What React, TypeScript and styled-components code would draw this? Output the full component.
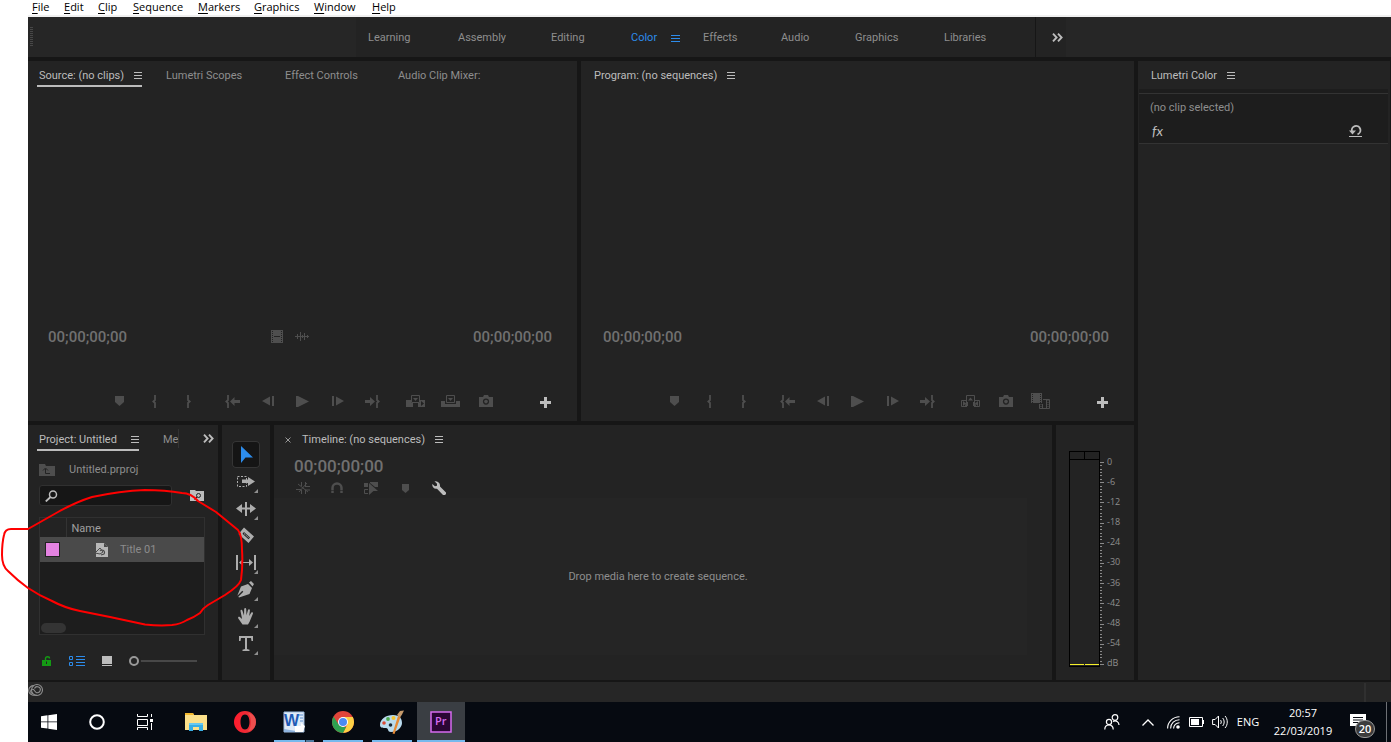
import React from "react";
import styled, { createGlobalStyle, css } from "styled-components";

const color = {
  gap: "#161616",
  panel: "#232323",
  bar: "#262626",
  well: "#1d1d1d",
  line: "#333333",
  text: "#8e8e8e",
  bright: "#bcbcbc",
  dim: "#4e4e4e",
  blue: "#2d8ceb",
};

const uiFont = `Roboto, "Open Sans", sans-serif`;
const sysFont = `"Open Sans", "Noto Sans", sans-serif`;

const GlobalStyle = createGlobalStyle`
  *, *::before, *::after { box-sizing: border-box; }
  body { margin: 0; background: #fff; }
  button { border: 0; padding: 0; margin: 0; background: none; color: inherit; font: inherit; text-align: left; cursor: default; }
  svg { display: block; flex: none; }
`;

/* ---------- frame ---------- */

const Page = styled.div`
  position: relative;
  min-height: 100vh;
  padding-left: 28px;
  display: flex;
  flex-direction: column;
  overflow: hidden;
  font-family: ${uiFont};
  font-size: 11px;
  line-height: 16px;
  color: ${color.text};
`;

const MenuBar = styled.nav`
  display: flex;
  height: 17px;
  padding: 0 0 2px 4px;
  border-bottom: 2px solid #f0f0f0;
  background: #fff;
  color: #000;
  font-family: ${sysFont};
  line-height: 13px;
`;

const MenuItem = styled.button<{ $w: number }>`
  width: ${(p) => p.$w}px;
  white-space: nowrap;
`;

const Underlined = styled.span`
  text-decoration: underline;
  text-underline-offset: 2px;
`;

const WorkspaceBar = styled.nav`
  display: flex;
  height: 40px;
  background: ${color.bar};
`;

const Grip = styled.div`
  width: 3px;
  height: 19px;
  margin: 10px 323px 0 2px;
  background: repeating-linear-gradient(#474747 0 1px, transparent 1px 2px);
`;

const WorkspaceTabs = styled.div`
  display: flex;
  align-items: center;
  width: 680px;
  padding: 2px 0 0 12px;
  background: ${color.panel};
  border-right: 1px solid ${color.gap};
`;

const WorkspaceTab = styled.button<{ $w: number; $active?: boolean }>`
  display: flex;
  align-items: center;
  gap: 14px;
  width: ${(p) => p.$w}px;
  color: ${(p) => (p.$active ? color.blue : color.text)};
`;

const OverflowCell = styled.button`
  width: 30px;
  padding-left: 16px;
  background: ${color.panel};
  color: ${color.bright};
`;

const Workspace = styled.main`
  flex: 1;
  display: flex;
  gap: 4px;
  padding: 4px 1px 2px 0;
  background: ${color.gap};
`;

const Stage = styled.div`
  flex: 1;
  display: flex;
  flex-direction: column;
  gap: 4px;
`;

const Monitors = styled.div`
  flex: 1;
  display: grid;
  grid-template-columns: 549fr 553fr;
  gap: 4px;
  min-height: 360px;
`;

const LowerRow = styled.div`
  display: grid;
  grid-template-columns: 190px 48px 1fr 78px;
  gap: 4px;
  height: 255px;
`;

const Panel = styled.section`
  display: flex;
  flex-direction: column;
  min-width: 0;
  background: ${color.panel};
`;

/* ---------- panel tabs ---------- */

const Tabs = styled.div<{ $pad: number }>`
  display: flex;
  flex: none;
  height: 28px;
  padding: 4px 0 0 ${(p) => p.$pad}px;
`;

const Tab = styled.button<{ $w?: number; $current?: boolean; $line?: boolean }>`
  display: flex;
  justify-content: ${(p) => (p.$line ? "space-between" : "flex-start")};
  gap: 10px;
  height: 22px;
  padding-top: 3px;
  white-space: nowrap;
  width: ${(p) => (p.$w ? p.$w + "px" : "auto")};
  color: ${(p) => (p.$current ? color.bright : color.text)};
  ${(p) =>
    p.$line &&
    css`
      padding-left: 2px;
      margin-right: 24px;
      border-bottom: 2px solid ${color.bright};
    `}
`;

const Burger = styled.span`
  flex: none;
  width: 8px;
  height: 7px;
  margin-top: 4px;
  background: repeating-linear-gradient(currentColor 0 1px, transparent 1px 3px);
`;

/* ---------- monitors ---------- */

const TimeRow = styled.div<{ $left: number }>`
  display: grid;
  grid-template-columns: 1fr auto 1fr;
  align-items: center;
  height: 20px;
  margin: auto 25px 43px ${(p) => p.$left}px;
`;

const Timecode = styled.span<{ $large?: boolean; $end?: boolean }>`
  font-weight: 500;
  font-size: ${(p) => (p.$large ? 17 : 15)}px;
  line-height: 20px;
  color: #707070;
  text-align: ${(p) => (p.$end ? "right" : "left")};
`;

const DragIcons = styled.div`
  display: flex;
  gap: 12px;
  padding: 0 20px 2px 0;
  color: ${color.dim};
`;

const Transport = styled.div`
  display: grid;
  grid-template-columns: 1fr auto 1fr;
  align-items: center;
  height: 20px;
  margin-bottom: 11px;
  color: ${color.dim};
`;

const TransportGroups = styled.div`
  display: flex;
  gap: 8px;
  grid-column: 2;
`;

const TransportGroup = styled.div`
  display: flex;
`;

const IconButton = styled.button<{ $w: number; $tint?: string }>`
  display: flex;
  align-items: center;
  justify-content: center;
  width: ${(p) => p.$w}px;
  height: 20px;
  color: ${(p) => p.$tint || "inherit"};
`;

const AddButton = styled(IconButton)`
  justify-self: end;
  margin: 2px 22px 0 0;
`;

/* ---------- project ---------- */

const PathRow = styled.div`
  display: flex;
  align-items: center;
  gap: 14px;
  height: 16px;
  margin: 9px 0 0 11px;
`;

const SearchRow = styled.div`
  display: flex;
  align-items: flex-start;
  gap: 18px;
  margin: 7px 0 0 11px;
`;

const SearchBox = styled.label`
  display: flex;
  align-items: center;
  width: 133px;
  height: 21px;
  padding-left: 5px;
  border: 1px solid #303030;
  border-radius: 3px;
  background: ${color.gap};
  color: ${color.bright};
`;

const SearchInput = styled.input`
  flex: 1;
  min-width: 0;
  height: 16px;
  border: 0;
  outline: 0;
  padding: 0 4px;
  background: none;
  color: ${color.bright};
  font: inherit;
`;

const TabMore = styled.button`
  display: flex;
  align-items: center;
  justify-content: flex-end;
  width: 36px;
  height: 19px;
  color: ${color.bright};
  border-left: 1px solid ${color.line};
`;

const ItemList = styled.div`
  display: flex;
  flex-direction: column;
  justify-content: space-between;
  width: 166px;
  height: 118px;
  margin: 11px 0 0 11px;
  border: 1px solid #303030;
  background: ${color.well};
`;

const ItemTable = styled.table`
  width: 100%;
  border-collapse: collapse;
  table-layout: fixed;
  th { height: 19px; padding: 2px 0 0 5px; font-weight: 400; text-align: left; color: #a0a0a0; background: ${color.panel}; }
  th:first-child { width: 26px; border-right: 1px solid ${color.line}; }
  td { height: 25px; padding: 0 0 0 5px; background: #4a4a4a; }
`;

const Swatch = styled.span`
  display: block;
  width: 15px;
  height: 15px;
  border: 1px solid #222;
  background: #e583e2;
`;

const ItemName = styled.div`
  display: flex;
  align-items: center;
  gap: 12px;
  padding: 1px 0 0 24px;
  color: #8c8c8c;
`;

const ScrollThumb = styled.div`
  width: 25px;
  height: 10px;
  margin: 0 0 1px 1px;
  border-radius: 5px;
  background: #343434;
`;

const ProjectFooter = styled.div`
  display: flex;
  align-items: center;
  height: 20px;
  margin: 16px 0 0 9px;
`;

const ZoomSlider = styled.input`
  width: 68px;
  height: 12px;
  margin: 0 0 0 12px;
  background: none;
  appearance: none;
  &::-webkit-slider-runnable-track {
    height: 12px;
    background: linear-gradient(#484848, #484848) center / 100% 2px no-repeat;
  }
  &::-webkit-slider-thumb {
    appearance: none;
    width: 10px;
    height: 10px;
    margin-top: 1px;
    border: 2px solid #999;
    border-radius: 50%;
    background: ${color.panel};
    box-shadow: 0 0 0 2px ${color.panel};
  }
`;

/* ---------- tools ---------- */

const ToolPanel = styled(Panel)`
  align-items: center;
  padding-top: 16px;
  color: #adadad;
`;

const Tool = styled.button<{ $active?: boolean }>`
  width: 28px;
  height: 27px;
  border-radius: 4px;
  ${(p) =>
    p.$active &&
    css`
      background: #151515;
      box-shadow: inset 0 0 0 1px #353535;
      color: ${color.blue};
    `}
`;

/* ---------- timeline ---------- */

const TimelineHead = styled.div`
  display: flex;
  padding: 3px 0 0 20px;
`;

const TimelineTools = styled.div`
  display: flex;
  height: 20px;
  margin: 2px 0 0 12px;
  color: ${color.dim};
`;

const DropZone = styled.div`
  flex: 1;
  display: flex;
  align-items: center;
  justify-content: center;
  margin: 0 25px 25px 0;
  padding-left: 15px;
  background: #252525;
`;

/* ---------- meters ---------- */

const MeterBody = styled.div`
  display: flex;
  margin: 26px 0 0 13px;
`;

const MeterWell = styled.div`
  display: grid;
  grid-template-columns: 14px 1fr;
  grid-template-rows: 8px 1fr;
  gap: 1px 0;
  width: 31px;
  height: 216px;
  border: 1px solid #000;
`;

const ClipLamp = styled.div`
  border-bottom: 1px solid #000;
  & + & { border-left: 1px solid #000; }
`;

const MeterChannel = styled.div`
  border-bottom: 1px solid #f5f02a;
  margin-bottom: 1px;
  & + & { margin-left: 1px; }
`;

const TickColumn = styled.div`
  padding-top: 11px;
`;

const Scale = styled.ul`
  display: flex;
  flex-direction: column;
  justify-content: space-between;
  height: 213px;
  margin: 5px 0 0 3px;
  padding: 0;
  list-style: none;
  font-family: ${sysFont};
  font-size: 9px;
  line-height: 12px;
`;

/* ---------- lumetri ---------- */

const LumetriPanel = styled(Panel)`
  width: 252px;
`;

const ClipInfo = styled.div`
  height: 55px;
  padding: 6px 0 0 11px;
  margin: 0 2px 0 1px;
  border-bottom: 1px solid ${color.line};
  background: linear-gradient(${color.line}, ${color.line}) 0 4px / 100% 1px no-repeat ${color.well};
`;

const ClipName = styled.div`
  padding-top: 5px;
`;

const FxRow = styled.div`
  display: flex;
  justify-content: space-between;
  align-items: center;
  height: 20px;
  margin: 5px 26px 0 2px;
  color: ${color.bright};
`;

const Fx = styled.button`
  font-family: Lato, sans-serif;
  font-style: italic;
  font-size: 14px;
  line-height: 18px;
`;

/* ---------- bottom bars ---------- */

const StatusBar = styled.footer`
  display: flex;
  align-items: flex-start;
  height: 20px;
  padding-top: 1px;
  background: ${color.bar};
  color: #8f8f8f;
`;

const StatusEnd = styled.div`
  width: 27px;
  height: 19px;
  margin-left: auto;
  border-left: 2px solid #303030;
`;

const Taskbar = styled.footer`
  display: flex;
  justify-content: space-between;
  height: 40px;
  overflow: hidden;
  background: #060a11;
  color: #fff;
`;

const TaskGroup = styled.div<{ $start?: boolean }>`
  display: flex;
  margin-left: ${(p) => (p.$start ? "-3px" : "3px")};
  gap: ${(p) => (p.$start ? 0 : 1)}px;
`;

const TaskButton = styled.button<{ $run?: boolean; $focus?: boolean; $stacked?: boolean }>`
  position: relative;
  display: flex;
  align-items: center;
  justify-content: center;
  width: 48px;
  height: 40px;
  background: ${(p) => (p.$focus ? "#3a3e43" : "none")};
  &::after {
    content: "";
    position: absolute;
    left: ${(p) => (p.$focus ? 0 : 4)}px;
    right: ${(p) => (p.$focus ? 0 : 4)}px;
    bottom: 0;
    height: ${(p) => (p.$run ? 2 : 0)}px;
    background: ${(p) => (p.$stacked ? "linear-gradient(90deg, #76b9ed 31px, #1d2c3a 31px 32px, #4f7ba0 32px)" : "#76b9ed")};
  }
`;

const TaskSide = styled.div`
  display: flex;
`;

const Tray = styled.div`
  display: flex;
  align-items: center;
  font-family: ${sysFont};
`;

const TrayButton = styled.button<{ $w: number }>`
  display: flex;
  justify-content: center;
  width: ${(p) => p.$w}px;
`;

const Clock = styled.time`
  width: 76px;
  text-align: center;
  line-height: 18px;
`;

const Notifications = styled.button`
  position: relative;
  display: flex;
  align-items: flex-start;
  width: 46px;
  height: 40px;
  padding: 12px 0 0 9px;
  margin-right: 4px;
  border-right: 1px solid #6d7075;
`;

const Badge = styled.span`
  position: absolute;
  left: 14px;
  top: 18px;
  width: 20px;
  height: 18px;
  border: 1px solid #9a9a9a;
  border-radius: 9px;
  background: #3c3c3c;
  font-weight: 600;
  line-height: 16px;
  text-align: center;
`;

const Markup = styled.svg`
  position: absolute;
  left: 0;
  top: 486px;
  pointer-events: none;
`;

/* ---------- icons ---------- */

const Ico = ({ w = 16, h = 16, children }: { w?: number; h?: number; children: React.ReactNode }) => (
  <svg width={w} height={h} viewBox={`0 0 ${w} ${h}`} fill="currentColor" aria-hidden="true">
    {children}
  </svg>
);

const Chevrons = () => (
  <Ico w={11} h={9}>
    <path d="M1 .7L4.600 4.500 1 8.300M6 .7l3.600 3.800L6 8.300" fill="none" stroke="currentColor" strokeWidth="1.900" />
  </Ico>
);

const lBrace = "M3 0v5L1.300 6.500 3 8v5";
const rBrace = "M1 0v5l1.700 1.500L1 8v5";

const icons: Record<string, React.ReactNode> = {
  Marker: <Ico w={9} h={10}><path d="M0 0h9v6L4.500 10 0 6z" /></Ico>,
  "Mark In": <Ico w={5} h={13}><path d={lBrace} fill="none" stroke="currentColor" strokeWidth="1.800" /></Ico>,
  "Mark Out": <Ico w={5} h={13}><path d={rBrace} fill="none" stroke="currentColor" strokeWidth="1.800" /></Ico>,
  "Go to In": (
    <Ico w={15} h={13}>
      <path d={lBrace} fill="none" stroke="currentColor" strokeWidth="1.800" />
      <path d="M5 6.500L9.500 2v3H15v3H9.500v3z" />
    </Ico>
  ),
  "Step Back": <Ico w={12} h={10}><path d="M0 5l8-4.500v9zM10 0h2v10h-2z" /></Ico>,
  Play: <Ico w={13} h={11}><path d="M0 0h2l11 5.500L2 11H0z" /></Ico>,
  "Step Forward": <Ico w={12} h={10}><path d="M0 0h2v10H0zM4 .5L12 5 4 9.500z" /></Ico>,
  "Go to Out": (
    <Ico w={15} h={13}>
      <path d="M0 5h5V2l5 4.500L5 11V8H0z" />
      <path d="M12 0v5l1.700 1.500L12 8v5" fill="none" stroke="currentColor" strokeWidth="1.800" />
    </Ico>
  ),
  Insert: (
    <Ico w={19} h={12}>
      <path fillRule="evenodd" d="M0 5h5v3h2v4H0zM12 8h2V5h5v7h-7zM15 6v5l3-2.500z" />
      <path d="M5.500 7.500V.5h8v7z" fill="none" stroke="currentColor" />
      <path d="M7 3h5L9.500 6z" />
    </Ico>
  ),
  Overwrite: (
    <Ico w={19} h={12}>
      <path d="M0 6h4v3h11V6h4v6H0z" />
      <path d="M5.500 7.500V.5h8v7z" fill="none" stroke="currentColor" />
      <path d="M7 3h5L9.500 6z" />
    </Ico>
  ),
  Lift: (
    <Ico w={19} h={12}>
      <path d="M6 11.500H.5v-6H5M13 11.500h5.500v-6H14M5.500 7.500V.5h8v7" fill="none" stroke="currentColor" />
      <path d="M9.500 2.500L12 5.500H7zM2 6l3 2.500L2 11zM17 6l-3 2.500 3 2.500zM5 7h2v4H4zM12 7h2l1 4h-3z" />
    </Ico>
  ),
  "Export Frame": (
    <Ico w={14} h={12}>
      <path fillRule="evenodd" d="M0 2h4l1-2h4l1 2h4v10H0zm7 1.500a3 3 0 100 6.200 3 3 0 000-6.200z" />
      <circle cx="7" cy="6.600" r="1.800" />
    </Ico>
  ),
  "Comparison View": (
    <Ico w={19} h={16}>
      <path d="M0 0h11v10H0z" />
      <path d="M1.500 1v9M9.500 1v9" stroke={color.panel} strokeDasharray="1 1" />
      <path d="M12 6.500h6.500v9h-10V11M11.500 11v4M15.500 7v8" fill="none" stroke="currentColor" />
      <path d="M10 11v5M17 7v8" stroke="currentColor" strokeDasharray="1 1" />
    </Ico>
  ),
  Plus: <Ico w={11} h={11}><path d="M4 0h3v4h4v3H7v4H4V7H0V4h4z" /></Ico>,
};

const triangle = <path d="M26 21v4h-4z" fill="#8f8f8f" />;

const tools: { name: string; art: React.ReactNode }[] = [
  { name: "Selection Tool", art: <path d="M9 5v17l4.500-5.500H21z" /> },
  {
    name: "Track Select Forward Tool",
    art: (
      <>
        <path d="M5.500 8.500h9v10h-9z" fill="none" stroke="currentColor" strokeDasharray="2 1.500" />
        <path d="M10 11.500h6V9l7 4.500-7 4.500v-3h-6z" />
        {triangle}
      </>
    ),
  },
  {
    name: "Ripple Edit Tool",
    art: (
      <>
        <path d="M13 7h2v14h-2zM4 13.500l6-4.500v3.500h3v2h-3V18zM24 13.500L18 9v3.500h-3v2h3V18z" />
        {triangle}
      </>
    ),
  },
  {
    name: "Razor Tool",
    art: (
      <>
        <path fillRule="evenodd" d="M12 5.500l10 9-5.500 6.500-10-9zM12 10l-1.500 1.800 6 5.500L18 15.500z" />
        <path d="M12 11.500l5 4.500" stroke="currentColor" strokeDasharray="2 1" />
      </>
    ),
  },
  {
    name: "Slip Tool",
    art: (
      <>
        <path d="M4 6h2v15H4zM22 6h2v15h-2zM7 13.500l4-3.500v3h6v-3l4 3.500-4 3.500v-3h-6v3z" />
        {triangle}
      </>
    ),
  },
  {
    name: "Pen Tool",
    art: (
      <>
        <path d="M16 8l4 4-2.500 6L7 21.500l-.7-.7 5-5-1-1-5 5L9 10.500zM17 6.500L19 5l3 3-1.500 2.500z" />
        {triangle}
      </>
    ),
  },
  {
    name: "Hand Tool",
    art: (
      <>
        <path d="M10.500 21.500L6.300 15.500c-.8-1.500.8-2.300 1.800-1.200l2 1.700L8.500 8c-.2-1.300 1.500-1.700 1.900-.4l1.600 5L12.200 6c.1-1.300 1.900-1.300 2 0l.3 6.300L16 7c.4-1.200 2-.8 1.900.5l-.7 5.500 2-3.200c.8-1.100 2.200-.3 1.700.9l-3.300 8-1.600 2.800z" />
        {triangle}
      </>
    ),
  },
  {
    name: "Type Tool",
    art: (
      <>
        <path d="M7 6h14v5h-1.500L19 8h-4v11l2.500.8V21h-7v-1.200L13 19V8H9l-.5 3H7z" />
        {triangle}
      </>
    ),
  },
];

const timelineTools: { name: string; tint?: string; art: React.ReactNode }[] = [
  {
    name: "Insert and overwrite as nests",
    art: <Ico w={14} h={14}><path d="M5.500 1v4M9.500 1v4M5.500 9v4M9.500 9v4M0 8.500h5M9 5.500h5M9 9h5M2 3l10 8M11 2L3 11" stroke="currentColor" /></Ico>,
  },
  {
    name: "Snap",
    art: <Ico w={12} h={12}><path d="M1.500 11V6a4.500 4.500 0 019 0v5" fill="none" stroke="currentColor" strokeWidth="2.500" /><path d="M0 8.500h12" stroke={color.panel} strokeWidth=".6" /></Ico>,
  },
  {
    name: "Linked Selection",
    art: (
      <Ico w={14} h={13}>
        <path d="M0 1h4v4H0zM6 0h8v5h-3L6 1z" />
        <path d="M4 7.500H.5v4H4" fill="none" stroke="currentColor" />
        <path d="M5 1l9 8H9.500L5 13z" />
      </Ico>
    ),
  },
  { name: "Add Marker", art: <Ico w={7} h={9}><path d="M0 0h7v6L3.500 9 0 6z" /></Ico> },
  {
    name: "Timeline Display Settings",
    tint: color.bright,
    art: <Ico w={14} h={14}><path d="M2.500.2L5 2.700v2L3 5.200.3 3C-.2 6 2 8.300 5 7.700L11 14h2l1-1v-1.500L8 5.500C8.500 2 6 0 2.500.2z" /></Ico>,
  },
];

/* ---------- data ---------- */

const menus: [string, number][] = [
  ["File", 32], ["Edit", 34], ["Clip", 35], ["Sequence", 65], ["Markers", 56], ["Graphics", 60], ["Window", 58], ["Help", 40],
];

const workspaces: [string, number][] = [
  ["Learning", 90], ["Assembly", 93], ["Editing", 80], ["Color", 72], ["Effects", 78], ["Audio", 74], ["Graphics", 89], ["Libraries", 60],
];

const sourceGroups = [
  ["Marker", "Mark In", "Mark Out"],
  ["Go to In", "Step Back", "Play", "Step Forward", "Go to Out"],
  ["Insert", "Overwrite", "Export Frame"],
];
const programGroups = [sourceGroups[0], sourceGroups[1], ["Lift", "Export Frame", "Comparison View"]];

const levels = ["0", "-6", "-12", "-18", "-24", "-30", "-36", "-42", "-48", "-54", "dB"];

const TransportBar = ({ groups }: { groups: string[][] }) => (
  <Transport>
    <TransportGroups>
      {groups.map((group, i) => (
        <TransportGroup key={i}>
          {group.map((name) => (
            <IconButton key={name} $w={35} aria-label={name}>{icons[name]}</IconButton>
          ))}
        </TransportGroup>
      ))}
    </TransportGroups>
    <AddButton $w={20} $tint={color.bright} aria-label="Button Editor">{icons.Plus}</AddButton>
  </Transport>
);

const MeterTicks = () => (
  <svg width="4" height="206" viewBox="0 0 4 206" stroke="#8a8a8a" shapeRendering="crispEdges" aria-hidden="true">
    {Array.from({ length: 61 }, (_, i) => (
      <path key={i} d={`M0 ${Math.round((i * 202) / 60) + 0.5}h${i % 6 === 0 ? 4 : 2}`} />
    ))}
  </svg>
);

export default function App() {
  return (
    <Page>
      <GlobalStyle />
      <MenuBar>
        {menus.map(([label, w]) => (
          <MenuItem key={label} $w={w}>
            <Underlined>{label[0]}</Underlined>{label.slice(1)}
          </MenuItem>
        ))}
      </MenuBar>

      <WorkspaceBar>
        <Grip />
        <WorkspaceTabs>
          {workspaces.map(([label, w]) => (
            <WorkspaceTab key={label} $w={w} $active={label === "Color"}>
              {label}
              {label === "Color" && <Ico w={9} h={7}><path d="M0 0h9v1H0zM0 3h9v1H0zM0 6h9v1H0z" /></Ico>}
            </WorkspaceTab>
          ))}
        </WorkspaceTabs>
        <OverflowCell aria-label="More workspaces"><Chevrons /></OverflowCell>
      </WorkspaceBar>

      <Workspace>
        <Stage>
          <Monitors>
            <Panel>
              <Tabs $pad={9}>
                <Tab $w={105} $current $line>Source: (no clips)<Burger /></Tab>
                <Tab $w={119}>Lumetri Scopes</Tab>
                <Tab $w={113}>Effect Controls</Tab>
                <Tab>Audio Clip Mixer:</Tab>
              </Tabs>
              <TimeRow $left={20}>
                <Timecode>00;00;00;00</Timecode>
                <DragIcons>
                  <Ico w={12} h={13}>
                    <path d="M0 0h12v13H0z" />
                    <path d="M1.500 1v12M10.500 1v12" stroke={color.panel} strokeDasharray="1 1" />
                    <path d="M3 6.500h6" stroke={color.panel} />
                  </Ico>
                  <Ico w={14} h={13}>
                    <path d="M0 6.500h14M2.500 4v5M5.500 2v9M7.500 5v3M9.500 3v7M12.500 5v3" stroke="currentColor" />
                  </Ico>
                </DragIcons>
                <Timecode $end>00;00;00;00</Timecode>
              </TimeRow>
              <TransportBar groups={sourceGroups} />
            </Panel>
            <Panel>
              <Tabs $pad={13}>
                <Tab $current>Program: (no sequences)<Burger /></Tab>
              </Tabs>
              <TimeRow $left={22}>
                <Timecode>00;00;00;00</Timecode>
                <span />
                <Timecode $end>00;00;00;00</Timecode>
              </TimeRow>
              <TransportBar groups={programGroups} />
            </Panel>
          </Monitors>

          <LowerRow>
            <Panel>
              <Tabs $pad={9}>
                <Tab $w={102} $current $line>Project: Untitled<Burger /></Tab>
                <Tab $w={15}>Me</Tab>
                <TabMore aria-label="More panels"><Chevrons /></TabMore>
              </Tabs>
              <PathRow>
                <Ico w={16} h={12}>
                  <path d="M0 0h6l1 2h9v10H0z" fill={color.dim} />
                  <path d="M11 9.500H6.500V5M4 6.500L6.500 4 9 6.500" fill="none" stroke={color.panel} />
                </Ico>
                Untitled.prproj
              </PathRow>
              <SearchRow>
                <SearchBox>
                  <Ico w={13} h={12}>
                    <circle cx="8" cy="4.500" r="3.500" fill="none" stroke="currentColor" strokeWidth="1.500" />
                    <path d="M5.500 7L.8 11.500" stroke="currentColor" strokeWidth="1.800" />
                  </Ico>
                  <SearchInput aria-label="Search project" />
                </SearchBox>
                <IconButton $w={14} $tint={color.bright} aria-label="Create search bin">
                  <Ico w={14} h={11}>
                    <path d="M0 0h5l1 1h8v10H0z" />
                    <circle cx="8.500" cy="5.500" r="2" fill="none" stroke={color.panel} />
                    <path d="M7 7L4.500 9.500" stroke={color.panel} />
                  </Ico>
                </IconButton>
              </SearchRow>
              <ItemList>
                <ItemTable>
                  <thead><tr><th aria-label="Label" /><th>Name</th></tr></thead>
                  <tbody>
                    <tr>
                      <td><Swatch /></td>
                      <td>
                        <ItemName>
                          <Ico w={13} h={14}>
                            <path d="M1 0h8l4 4v10H1z" fill="#b8b8b8" />
                            <path d="M9 0v4h4z" fill="#4a4a4a" />
                            <path d="M0 10l5-5 3 4-3 2z" fill="#b8b8b8" stroke="#4a4a4a" />
                            <path d="M5 8a2.500 2.500 0 114 3l-3 1" fill="none" stroke="#4a4a4a" strokeWidth="1.200" />
                          </Ico>
                          Title 01
                        </ItemName>
                      </td>
                    </tr>
                  </tbody>
                </ItemTable>
                <ScrollThumb />
              </ItemList>
              <ProjectFooter>
                <IconButton $w={20} $tint="#149a14" aria-label="Project writable">
                  <Ico w={10} h={10}>
                    <path fillRule="evenodd" d="M0 4h9v6H0zm4 1.500V8h1V5.500z" />
                    <path d="M3.500 4V2.500Q3.500 .8 5.500.8T7.500 2.500" fill="none" stroke="currentColor" strokeWidth="1.400" />
                  </Ico>
                </IconButton>
                <IconButton $w={40} $tint={color.blue} aria-label="List View">
                  <Ico w={16} h={10}>
                    <path d="M.5.5h3v3h-3zM.5 6.500h3v3h-3zM7 .5h9M7 3.500h9M7 6.500h9M7 9.500h9" fill="none" stroke="currentColor" />
                  </Ico>
                </IconButton>
                <IconButton $w={20} $tint={color.bright} aria-label="Icon View">
                  <Ico w={10} h={10}><path d="M0 0h10v8H0zM0 9h10v1H0z" /></Ico>
                </IconButton>
                <ZoomSlider type="range" min={0} max={100} defaultValue={0} aria-label="Icon size" />
              </ProjectFooter>
            </Panel>

            <ToolPanel>
              {tools.map((tool, i) => (
                <Tool key={tool.name} $active={i === 0} aria-label={tool.name}>
                  <Ico w={28} h={27}>{tool.art}</Ico>
                </Tool>
              ))}
            </ToolPanel>

            <Panel>
              <Tabs $pad={11}>
                <Tab $w={17} aria-label="Close panel">
                  <Ico w={6} h={16}><path d="M.5 5.500l5 5M5.500 5.500l-5 5" stroke="#999" /></Ico>
                </Tab>
                <Tab $current>Timeline: (no sequences)<Burger /></Tab>
              </Tabs>
              <TimelineHead><Timecode $large>00;00;00;00</Timecode></TimelineHead>
              <TimelineTools>
                {timelineTools.map((t) => (
                  <IconButton key={t.name} $w={34} $tint={t.tint} aria-label={t.name}>{t.art}</IconButton>
                ))}
              </TimelineTools>
              <DropZone>Drop media here to create sequence.</DropZone>
            </Panel>

            <Panel>
              <MeterBody>
                <MeterWell>
                  <ClipLamp /><ClipLamp />
                  <MeterChannel /><MeterChannel />
                </MeterWell>
                <TickColumn><MeterTicks /></TickColumn>
                <Scale>{levels.map((l) => <li key={l}>{l}</li>)}</Scale>
              </MeterBody>
            </Panel>
          </LowerRow>
        </Stage>

        <LumetriPanel>
          <Tabs $pad={13}>
            <Tab $current>Lumetri Color<Burger /></Tab>
          </Tabs>
          <ClipInfo>
            <ClipName>(no clip selected)</ClipName>
            <FxRow>
              <Fx>fx</Fx>
              <button aria-label="Reset effect">
                <Ico w={13} h={13}>
                  <path d="M3 6.500A4.300 4.300 0 118.500 9.300" fill="none" stroke="currentColor" strokeWidth="1.800" />
                  <path d="M0 5.500h7L3.500 9.500zM0 11h13v1H0z" />
                </Ico>
              </button>
            </FxRow>
          </ClipInfo>
        </LumetriPanel>
      </Workspace>

      <StatusBar>
        <Ico w={16} h={14}>
          <g fill="none" stroke="currentColor" strokeWidth="1.100">
            <circle cx="9" cy="7" r="5.500" />
            <path d="M6 2.700a4.500 4.500 0 00-1 9.500h4" />
            <path d="M8 9.500L5.500 6.500a2 2 0 10-.5 3.800M6.500 5.500A3 3 0 0112 8a3 3 0 01-4 1.500" />
          </g>
        </Ico>
        <StatusEnd />
      </StatusBar>

      <Taskbar>
        <TaskSide>
          <TaskGroup $start>
            <TaskButton aria-label="Start">
              <Ico><path d="M0 2.200L6.500 1.300V7.500H0zM7.300 1.200L16 0v7.500H7.300zM0 8.300h6.500v6.300L0 13.700zM7.300 8.300H16V16l-8.700-1.200z" /></Ico>
            </TaskButton>
            <TaskButton aria-label="Cortana">
              <Ico><circle cx="8" cy="8" r="6.800" fill="none" stroke="currentColor" strokeWidth="2" /></Ico>
            </TaskButton>
            <TaskButton aria-label="Task View">
              <Ico w={17} h={16}><path d="M.5 0v2.500h10V0M.5 5.500h10v6H.5zM.5 16v-2.500h10V16M14.500 0v3M14.500 9v7" fill="none" stroke="currentColor" /><path d="M13 5h3v3h-3z" /></Ico>
            </TaskButton>
          </TaskGroup>
          <TaskGroup>
            <TaskButton aria-label="File Explorer">
              <Ico w={22} h={18}>
                <path d="M0 0h8l1 2h13v15H0z" fill="#fbe08a" /><path d="M0 0h8l1 2H0z" fill="#f4b92d" />
                <path d="M4 10h14v8h-4v-4H8v4H4z" fill="#39aee4" /><path d="M4 10h14v2H4z" fill="#66c8f0" />
              </Ico>
            </TaskButton>
            <TaskButton aria-label="Opera">
              <Ico w={22} h={22}>
                <defs><linearGradient id="opera" x1="0" x2="1"><stop offset="0" stopColor="#ff1b2d" /><stop offset="1" stopColor="#e3383c" /></linearGradient></defs>
                <path fillRule="evenodd" fill="url(#opera)" d="M11 0a11 11 0 100 22 11 11 0 000-22zm0 3.500c3 0 4.500 3.500 4.500 7.500s-1.500 7.500-4.500 7.500S6.500 15 6.500 11 8 3.500 11 3.500z" />
                <path d="M14 2c6 1 8 5 8 9s-2 8-8 9c2-2 3-5 3-9s-1-7-3-9z" fill="#f4605c" opacity=".6" />
              </Ico>
            </TaskButton>
            <TaskButton $run $stacked aria-label="Word">
              <Ico w={22} h={22}>
                <path d="M1 1h20v20H1z" fill="#dfeaf7" stroke="#9dbce0" />
                <path d="M16 4h4M17 7h3M17 10h3" stroke="#5b8fd0" />
                <path d="M1 18l12 2v1H1z" fill="#8fb4e0" />
                <text x="1" y="15" fontFamily="Liberation Sans, sans-serif" fontWeight="700" fontSize="16" fill="#1f5bb5">W</text>
                <path d="M12 15h6v-3l4 3-2 6h-8z" fill="#fff" />
              </Ico>
            </TaskButton>
            <TaskButton $run aria-label="Chrome">
              <Ico w={22} h={22}>
                <circle cx="11" cy="11" r="11" fill="#e0453a" />
                <path d="M11 6h9.800A11 11 0 0111 22l4.300-8.500z" fill="#fdd045" />
                <path d="M1.500 5.500l5.200 8 4.300 2.500h3.100L11 22A11 11 0 011.500 5.500z" fill="#2ea150" />
                <circle cx="11" cy="11" r="5" fill="#fff" /><circle cx="11" cy="11" r="4" fill="#4a8af4" />
              </Ico>
            </TaskButton>
            <TaskButton $run aria-label="Paint">
              <Ico w={24} h={24}>
                <path d="M0 15C0 9 6 5 13 5s9 4 9 8-4 9-11 9c-4 0-2-4-5-4s-6 0-6-3z" fill="#b9dbee" />
                <circle cx="4" cy="13" r="1.800" fill="#d94a35" /><circle cx="8" cy="9" r="1.900" fill="#4ba84d" />
                <circle cx="13.500" cy="8" r="2" fill="#f4c430" /><circle cx="10.500" cy="15" r="1.800" fill="#1b2733" />
                <path d="M18 6l2.500 1-6 17-2-.5z" fill="#e58a35" /><path d="M17 5l3-4 4-.5-2 4-2 3z" fill="#c59a6c" />
              </Ico>
            </TaskButton>
            <TaskButton $run $focus aria-label="Premiere Pro">
              <Ico w={22} h={22}>
                <path d="M1 1h20v20H1z" fill="#2a0634" stroke="#d66bf0" strokeWidth="1.500" />
                <text x="5" y="14" fontFamily="Open Sans, sans-serif" fontWeight="600" fontSize="11" fill="#d66bf0">Pr</text>
              </Ico>
            </TaskButton>
          </TaskGroup>
        </TaskSide>
        <Tray>
          <TrayButton $w={42} aria-label="People">
            <Ico><g fill="none" stroke="currentColor" strokeWidth="1.200"><circle cx="5" cy="8" r="2.600" /><path d="M.8 15.500c0-6 8.400-6 8.400 0" /><circle cx="11" cy="3.500" r="2.800" /><path d="M9 7.500c3-1.500 6 .5 6 3.500" /></g></Ico>
          </TrayButton>
          <TrayButton $w={30} aria-label="Show hidden icons">
            <Ico w={12} h={7}><path d="M.5 6.500L6 1l5.500 5.500" fill="none" stroke="currentColor" strokeWidth="1.300" /></Ico>
          </TrayButton>
          <TrayButton $w={20} aria-label="Network">
            <Ico w={13} h={13}><g fill="none" stroke="currentColor" strokeWidth="1.100"><path d="M.6 12.500C.6 6 6 .8 12.500.8M3.600 12.500c0-5 4-8.800 8.900-8.800M6.600 12.500c0-3.200 2.600-5.800 5.900-5.800" /></g><circle cx="11" cy="11" r="1.800" /></Ico>
          </TrayButton>
          <TrayButton $w={26} aria-label="Battery">
            <Ico w={15} h={10}><path d="M.5.5h13v9H.5zM14.500 3v4" fill="none" stroke="currentColor" /><path d="M2 2h8v6H2z" /></Ico>
          </TrayButton>
          <TrayButton $w={22} aria-label="Volume">
            <Ico w={16} h={14}><path d="M.6 4.500h2.500L6.500 1v12L3.100 9.500H.6zM8.500 5c1 1 1 3 0 4M10.700 3c2 2 2 6 0 8M13 1c3 3 3 9 0 12" fill="none" stroke="currentColor" /></Ico>
          </TrayButton>
          <TrayButton $w={34} aria-label="Keyboard language">ENG</TrayButton>
          <Clock>20:57<br />22/03/2019</Clock>
          <Notifications aria-label="Notifications, 20 new">
            <Ico><path d="M0 0h16v12h-6l-3 3v-3H0z" /><path d="M3 3.500h10M3 6h10M3 8.500h7" stroke="#060a11" /></Ico>
            <Badge>20</Badge>
          </Notifications>
        </Tray>
      </Taskbar>

      <Markup width="250" height="144" viewBox="0 486 250 144" aria-hidden="true">
        <path
          d="M28 529H11Q5 529 4 535Q2 543 2 555Q2 566 8 571Q17 580 28 588Q40 596 52 601Q65 608 80 611L110 617L145 624.500Q160 626 172 625Q181 624 187 620Q193 618 200 613Q203 608 208 605L225 595Q239 586 241 580Q243 565 242 550Q242 535 238 530L216 512L198 501Q191 493 182 493Q165 490 145 490Q120 491 92 497Q76 502 58 512Z"
          fill="none"
          stroke="#f00"
          strokeWidth="2"
          strokeLinejoin="round"
        />
      </Markup>
    </Page>
  );
}
